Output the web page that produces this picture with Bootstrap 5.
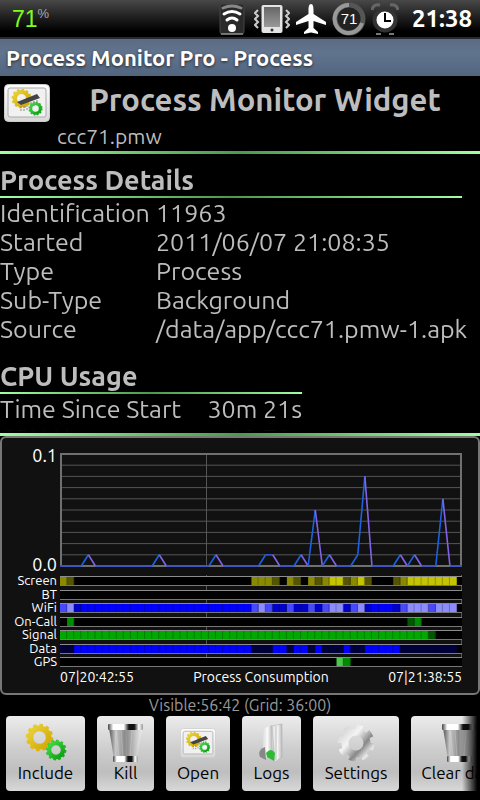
<!DOCTYPE html>
<html lang="en">
<head>
<meta charset="utf-8">
<meta name="viewport" content="width=device-width, initial-scale=1">
<title>Process Monitor Pro - Process</title>
<link href="https://cdn.jsdelivr.net/npm/bootstrap@5.3.0/dist/css/bootstrap.min.css" rel="stylesheet">
<style>
body{background:#000;color:#bdbdbd;font-family:Ubuntu,"Noto Sans",sans-serif;font-size:25px;line-height:29px}
.status{height:39px;background:linear-gradient(#484848,#1c1c1c 50%,#000 85%,#000);border-bottom:2px solid #242a32;gap:5px}
.level{font-family:"Liberation Sans Narrow","Liberation Sans",sans-serif;font-size:23px;color:#7dff1a;line-height:30px}
.level sup{font-size:13px;color:#aaa;top:-9px}
.clock{font-size:24px;font-weight:700;color:#fff}
.titlebar{height:37px;padding-left:6px;background:linear-gradient(#5c6b82,#61748f 40%,#52657f);color:#fff;font-size:22px;line-height:37px;font-weight:700;text-shadow:0 1px 3px #222}
.rule{height:3px;background:linear-gradient(90deg,#a0ffa0,#4a9a4a 50%,#a0ffa0)}
.thin{height:2px}
.app-title{font-size:31px;line-height:32px;font-weight:700}
.pkg{font-size:21px;line-height:29px;padding-left:57px}
.details{min-height:0;padding-top:11px;-webkit-mask-image:linear-gradient(#000 calc(100% - 12px),transparent calc(100% - 2px));mask-image:linear-gradient(#000 calc(100% - 12px),transparent calc(100% - 2px))}
.sect{margin-bottom:17px}
.sect h2{font-size:27px;line-height:31px;font-weight:700;margin:0}
.sect table{margin-top:1px}
.sect th{font-weight:400}
.sect th,.sect td{padding:0;white-space:nowrap}
.proc{width:462px}.proc th{min-width:156px}
.cpu{width:302px}
.chart{background:#111;border:2px solid #777;border-radius:6px;color:#fff;padding:7px 16px 8px 0}
.axis{width:58px;flex:none;text-align:right;padding-right:3px}
.scale{font-size:18px;line-height:20px}
.plot-wrap{padding:8px 0 7px}
.plot-wrap svg{height:114px}
.tracks{height:95px;padding-top:1px}
.tracks svg{height:93px}
.names{font-size:13px;line-height:13px;height:95px;padding-bottom:1px}
.times{font-size:14px;line-height:16px;padding-left:58px}
.caption-line{font-size:16px;line-height:20px;color:#999}
.tools{gap:12px;padding:1px 6px 9px;position:relative}
.tools::after{content:"";position:absolute;right:0;top:0;bottom:0;width:18px;background:linear-gradient(90deg,transparent,#000 85%);pointer-events:none}
.tool{--bs-btn-color:#000;--bs-btn-hover-color:#000;height:75px;border:0;border-radius:4px;padding:7px 0 6px;background:linear-gradient(#ececec,#cdcdcd 45%,#bebebe 75%,#d8d8d8);font-size:17px;line-height:20px;white-space:nowrap;flex:none}
.tool svg{height:40px}
.w-a{width:79px}.w-b{width:57px}.w-c{width:64px}.w-d{width:59px}.w-e{width:86px}.w-f{width:98px}
</style>
<script src="https://cdn.jsdelivr.net/npm/bootstrap@5.3.0/dist/js/bootstrap.bundle.min.js"></script>
</head>
<body>
<svg width="0" height="0" class="position-absolute" aria-hidden="true">
<defs>
<linearGradient id="gold" x2="1" y2="1"><stop stop-color="#e8d13c"/><stop offset="1" stop-color="#d2a804"/></linearGradient>
<linearGradient id="leaf" x2="1" y2="1"><stop stop-color="#45dc45"/><stop offset="1" stop-color="#0a9d12"/></linearGradient>
<linearGradient id="steel" gradientUnits="userSpaceOnUse" x1="-18" y1="-14" x2="18" y2="18"><stop stop-color="#ccc"/><stop offset=".35" stop-color="#f4f4f4"/><stop offset=".5" stop-color="#bbb"/><stop offset=".62" stop-color="#888"/><stop offset=".8" stop-color="#e8e8e8"/><stop offset="1" stop-color="#aaa"/></linearGradient>
<linearGradient id="can"><stop stop-color="#555"/><stop offset=".2" stop-color="#c8c8c8"/><stop offset=".5" stop-color="#858585"/><stop offset=".75" stop-color="#bbb"/><stop offset="1" stop-color="#eee"/></linearGradient>
<linearGradient id="rim"><stop stop-color="#444"/><stop offset=".15" stop-color="#fff"/><stop offset=".45" stop-color="#fff"/><stop offset=".6" stop-color="#111"/><stop offset=".75" stop-color="#111"/><stop offset=".88" stop-color="#fff"/><stop offset="1" stop-color="#999"/></linearGradient>
<linearGradient id="paper"><stop stop-color="#ddd"/><stop offset=".5" stop-color="#fafafa"/><stop offset="1" stop-color="#bbb"/></linearGradient>
<linearGradient id="box" x2="0" y2="1"><stop stop-color="#fff"/><stop offset="1" stop-color="#d8d8d8"/></linearGradient>
<linearGradient id="grey" x2="0" y2="1"><stop stop-color="#666"/><stop offset="1" stop-color="#999"/></linearGradient>
<symbol id="cog" viewBox="-15 -15 30 30"><g fill="none"><circle r="9.500" stroke-width="6"/><circle r="12.700" stroke-width="3" pathLength="24" stroke-dasharray="1.100 .9"/></g></symbol>
<symbol id="cogs" viewBox="0 0 44 40"><use href="#cog" x="1" y="0" width="29" height="29" stroke="url(#gold)"/><use href="#cog" x="21" y="16" width="22" height="22" stroke="url(#leaf)"/></symbol>
<symbol id="pmw" viewBox="0 0 46 38"><rect x=".5" y=".5" width="45" height="37" rx="4" fill="url(#box)" stroke="#ccc"/><rect x="4" y="4" width="38" height="29" rx="2" fill="#f1f1f1" stroke="#aaa"/><use href="#cog" x="7" y="4" width="21" height="21" stroke="url(#gold)"/><use href="#cog" x="24" y="17" width="15" height="15" stroke="url(#leaf)"/><path d="M13 18 33 10 36 14 17 21Z" fill="#444"/><path d="M17 22v6M20 22v5M23 21v6M27 18v5M30 17v5M33 16v4" stroke="#888" stroke-dasharray="2 1"/></symbol>
<symbol id="bin" viewBox="0 0 36 40"><path d="M1 5H34L29 36H6Z" fill="url(#can)"/><path d="M8 8 11 34M13 7 15 34M18 7V34M24 7 22 34" stroke="#fff" opacity=".2"/><rect x="0" y="1" width="35" height="6" rx="1" fill="url(#rim)"/><rect x="5" y="33" width="25" height="6" rx="1" fill="url(#rim)"/></symbol>
</defs>
</svg>

<div class="vh-100 d-flex flex-column overflow-hidden">
<header>
<div class="status d-flex align-items-center ps-2 pe-2">
<span class="level ms-1 me-auto">71<sup>%</sup></span>
<svg width="26" height="32" viewBox="0 0 26 32"><rect x="1" y="1" width="24" height="30" rx="2" fill="#292929" stroke="#444"/><path d="M2 31H24" stroke="#bbb"/><g fill="none" stroke="#fff" stroke-width="3" stroke-linecap="round"><path d="M4 5Q13 1 22 5" stroke="#888"/><path d="M5 11Q13 6 21 11"/><path d="M8 17Q13 13 18 17"/></g><circle cx="13" cy="25" r="4" fill="#fff"/></svg>
<svg class="ms-1" width="36" height="30" viewBox="0 0 36 30"><rect x="7.500" y="1" width="21" height="28" rx="2" fill="#e4e4e4"/><rect x="10" y="3" width="16" height="20" fill="url(#grey)"/><circle cx="18" cy="26" r="1.500" fill="#333"/><path d="M4 6 1 9 4 12 1 15 4 18 1 21 4 24M32 6 35 9 32 12 35 15 32 18 35 21 32 24" fill="none" stroke="#ccc" stroke-width="2"/></svg>
<svg width="32" height="32" viewBox="0 0 32 32"><path d="M16 1C18 1 18.500 4 18.500 7V11L31 19V22L18.500 18V25L23 29V31L16 29.500 9 31V29L13.500 25V18L1 22V19L13.500 11V7C13.500 4 14 1 16 1Z" fill="#fff"/></svg>
<svg width="34" height="34" viewBox="0 0 34 34"><circle cx="17" cy="17" r="14" fill="#222" stroke="#555" stroke-width="5"/><path d="M30 21A14 14 0 1 1 17 3" fill="none" stroke="#999" stroke-width="4"/><text x="17" y="22" text-anchor="middle" font-size="15" fill="#fff" font-family="Liberation Sans">71</text></svg>
<svg width="28" height="32" viewBox="0 0 28 32"><circle cx="14" cy="17" r="10.500" fill="#fff" stroke="#333" stroke-width="4"/><path d="M1 7Q2 1 9 2M27 7Q26 1 19 2" fill="none" stroke="#666" stroke-width="3"/><path d="M14 10V18H20" fill="none" stroke="#000" stroke-width="2"/><path d="M5 31H10M18 31H23" stroke="#777" stroke-width="2"/></svg>
<span class="clock ms-2">21:38</span>
</div>
<div class="titlebar text-truncate">Process Monitor Pro - Process</div>
<div class="d-flex align-items-start ps-1 pt-2">
<svg width="46" height="38" role="img" aria-label="Process Monitor Widget icon"><use href="#pmw"/></svg>
<h1 class="app-title flex-fill text-center m-0">Process Monitor Widget</h1>
</div>
<div class="pkg">ccc71.pmw</div>
<div class="rule"></div>
</header>

<main class="details flex-fill overflow-hidden">
<section class="sect proc">
<h2>Process Details</h2><div class="rule thin"></div>
<table class="w-100"><tbody>
<tr><th>Identification</th><td>11963</td></tr>
<tr><th>Started</th><td>2011/06/07 21:08:35</td></tr>
<tr><th>Type</th><td>Process</td></tr>
<tr><th>Sub-Type</th><td>Background</td></tr>
<tr><th>Source</th><td>/data/app/ccc71.pmw-1.apk</td></tr>
</tbody></table>
</section>
<section class="sect cpu">
<h2>CPU Usage</h2><div class="rule thin"></div>
<table class="w-100"><tbody>
<tr><th>Time Since Start</th><td class="text-end">30m 21s</td></tr>
<tr><th>CPU Usage</th><td class="text-end">12.70s</td></tr>
</tbody></table>
</section>
</main>

<footer>
<div class="rule"></div>
<div class="chart">
<div class="d-flex">
<div class="axis scale d-flex flex-column justify-content-between"><span>0.1</span><span>0.0</span></div>
<div class="plot-wrap flex-fill"><svg id="plot" class="d-block w-100" viewBox="0 0 402 114" preserveAspectRatio="none"></svg></div>
</div>
<div class="d-flex">
<div class="axis names d-flex flex-column justify-content-between"><span>Screen</span><span>BT</span><span>WiFi</span><span>On-Call</span><span>Signal</span><span>Data</span><span>GPS</span></div>
<div class="tracks flex-fill"><svg id="tracks" class="d-block w-100" viewBox="0 0 402 93" preserveAspectRatio="none"></svg></div>
</div>
<div class="times d-flex justify-content-between"><span>07|20:42:55</span><span>Process Consumption</span><span>07|21:38:55</span></div>
</div>
<div class="caption-line text-center">Visible:56:42 (Grid: 36:00)</div>
<nav class="tools d-flex overflow-hidden" aria-label="Actions">
<button class="btn tool w-a d-flex flex-column align-items-center"><svg width="44"><use href="#cogs"/></svg>Include</button>
<button class="btn tool w-b d-flex flex-column align-items-center"><svg width="36"><use href="#bin"/></svg>Kill</button>
<button class="btn tool w-c d-flex flex-column align-items-center"><svg width="36"><use href="#pmw"/></svg>Open</button>
<button class="btn tool w-d d-flex flex-column align-items-center"><svg width="28" viewBox="0 0 28 40"><path d="M5 6 14 2V33L5 35Z" fill="url(#paper)"/><path d="M14 3 24 1V34L17 39Z" fill="url(#paper)" stroke="#aaa" stroke-width=".5"/><path d="M18 3V37" stroke="#bbb"/><path d="M7 24Q-1 27 2 34L8 37Z" fill="#888"/><path d="M8 30Q13 24 17 30L16 38 9 34Z" fill="#2dbb35"/></svg>Logs</button>
<button class="btn tool w-e d-flex flex-column align-items-center"><svg width="38" viewBox="-19 -20 38 40"><g fill="none" stroke="url(#steel)"><circle r="11" stroke-width="7"/><circle r="15.500" stroke-width="6" pathLength="16" stroke-dasharray="1.100 .9"/></g></svg>Settings</button>
<button class="btn tool w-f d-flex flex-column align-items-center"><svg width="36"><use href="#bin"/></svg>Clear data</button>
</nav>
</footer>
</div>

<script>
const N = 57, W = 402, step = 7.09;
const el = (tag, a) => '<' + tag + ' ' + Object.entries(a).map(([k, v]) => k + '="' + v + '"').join(' ') + '/>';
const line = (x1, y1, x2, y2, stroke, w = 1) => el('line', {x1, y1, x2, y2, stroke, 'stroke-width': w});
const load = {4:1,14:1,22:1,29:1,30:1,34:1,36:5,38:1,42:1,43:8,48:1,50:1,54:6};
let out = '';
for (let i = 1; i < 10; i++) out += line(0, 1 + i * 11.2, W, 1 + i * 11.2, '#555');
out += line(146.5, 0, 146.5, 114, '#555');
out += el('rect', {x: 1, y: 1, width: W - 2, height: 112, fill: 'none', stroke: '#707070', 'stroke-width': 2});
for (let i = 0; i < N; i++) {
  const a = load[i] || 0, b = load[i + 1] || 0;
  out += line(i * step, 113 - a * 11.2, Math.min(W, (i + 1) * step), 113 - b * 11.2, b > a ? '#1a62e0' : b < a ? '#8263e6' : '#344fd0', 1.6);
}
document.getElementById('plot').innerHTML = out;

// Each track lists [first cell, last cell, colour].
const Y='#8a8a00', y='#555500', L='#c4c400', B='#0000ff', b='#0000c8', M='#4848ff', P='#8c8cff', n='#00003c', G='#00a800', g='#005800';
const tracks = [
 [[0,0,Y],[1,1,y],[27,29,Y],[30,30,y],[32,32,Y],[33,33,y],[35,35,Y],[36,36,y],[37,37,Y],[38,39,L],[40,40,y],[41,41,Y],[42,42,L],[43,43,y],[47,47,y],[48,48,Y],[49,55,L]],
 [],
 [[0,0,M],[1,1,P],[2,2,b],[3,26,B],[27,27,M],[28,28,P],[29,29,M],[30,31,b],[32,32,M],[33,34,b],[35,35,M],[36,36,b],[37,37,M],[38,39,P],[40,40,b],[41,41,M],[42,42,P],[43,43,b],[44,46,B],[47,47,b],[48,48,M],[49,51,P],[52,52,M],[53,55,P]],
 [[1,1,'#008c00'],[49,49,g],[50,50,'#008c00']],
 [[0,51,G],[52,52,g]],
 [[0,1,n],[2,26,B],[27,29,n],[30,31,B],[32,32,n],[33,34,B],[35,35,n],[36,36,B],[37,39,n],[40,40,B],[41,42,n],[43,47,B],[48,55,n]],
 [[39,39,'#48c848'],[40,40,'#008c00']]
];
out = line(146.5, 0, 146.5, 90, '#555') + line(401.5, 0, 401.5, 92, '#555');
tracks.forEach((t, r) => {
  const top = Math.round(1 + r * 13.5);
  out += el('rect', {x: 0, y: top, width: W, height: 9, fill: '#000'});
  t.forEach(([from, to, fill]) => {
    out += el('rect', {x: from * step, y: top, width: (to - from + 1) * step, height: 9, fill});
    for (let c = from + 1; c <= to + 1; c++) out += el('rect', {x: c * step - 1, y: top, width: 1, height: 9, fill: '#000', opacity: .25});
  });
  out += line(0, top + .5, W, top + .5, '#8c8c8c') + line(0, top + 9.5, W, top + 9.5, '#777');
});
document.getElementById('tracks').innerHTML = out;
</script>
</body>
</html>
